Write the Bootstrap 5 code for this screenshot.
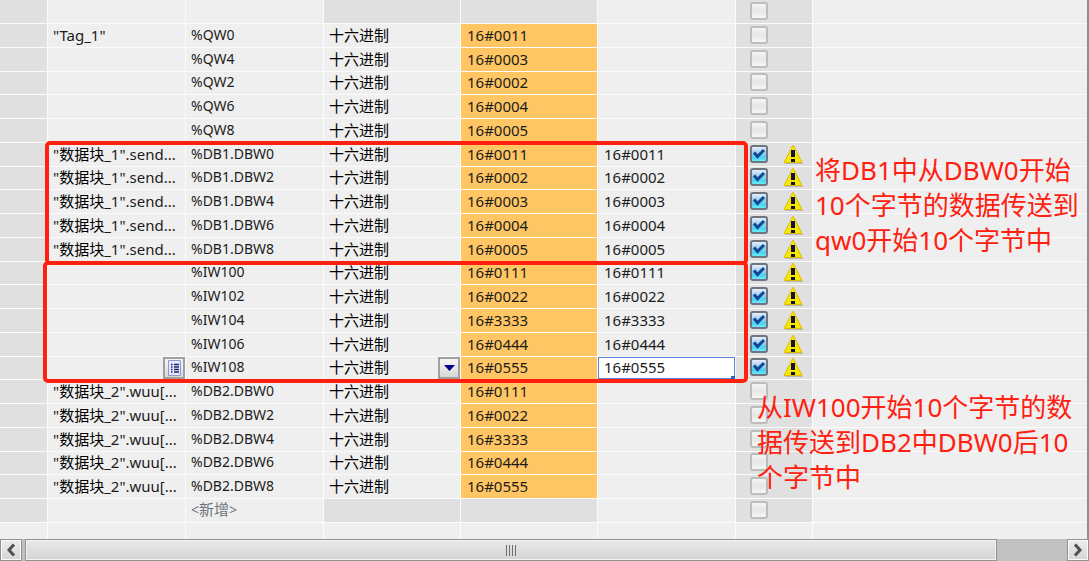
<!DOCTYPE html>
<html lang="zh-CN">
<head>
<meta charset="utf-8">
<meta name="viewport" content="width=device-width, initial-scale=1">
<title>监控表</title>
<link href="https://cdn.jsdelivr.net/npm/bootstrap@5.3.0/dist/css/bootstrap.min.css" rel="stylesheet">
<style>
  body { font-family: "Noto Sans", "Noto Sans CJK SC", sans-serif; font-size: 14px; color: #1c1c1c; background: #efefef; }
  .watch-pane { min-height: 0; border-right: 2px solid #8f8c9c; }
  .watch-table { table-layout: fixed; border-collapse: separate; border-spacing: 0; line-height: 20px; }
  .watch-table tr { height: 24px; }
  .watch-table tr:nth-child(4n) { height: 23px; }
  .watch-table td { padding: 0 5px 2px; border-right: 1px solid #fbfbfb; border-bottom: 1px solid #fbfbfb; background: #efefef; vertical-align: middle; white-space: nowrap; overflow: hidden; }
  .watch-table td:last-child { border-right: 0; }
  .watch-table td.shade { background: #e0e0e0; }
  .watch-table td.live { background: #ffc663; }
  .watch-table td.num { font-size: 15px; padding-left: 6px; }
  .watch-table td.tag-name { font-size: 15px; }
  .watch-table td.fmt, .cjk { font-size: 15px; color: #000; }
  .watch-table td.edit { padding: 0; }
  .col-index { width: 48px; } .col-wide { width: 138px; } .col-mid { width: 137px; } .col-flag { width: 77px; }
  .watch-table td.flags { padding: 0 0 2px 14px; }
  .flag-pair { height: 20px; gap: 15px; }
  .tick { appearance: none; display: block; width: 18px; height: 18px; margin: 0; border: 2px solid #bdbdbd; border-radius: 3px; background: linear-gradient(#f5f5f5, #e6e6e6 50%, #f6f6f6); }
  .tick:checked { border-color: #6f7680; background: url("data:image/svg+xml,%3Csvg xmlns='http://www.w3.org/2000/svg' viewBox='0 0 14 14'%3E%3Cpath d='M2 5.5l3.5 4L12 3' fill='none' stroke='%23084a94' stroke-width='3'/%3E%3C/svg%3E") center / 14px 14px no-repeat, linear-gradient(#e8f0ff, #a4ccf0 40%, #4bd0ee 75%, #6cecf8); }
  .tool { width: 22px; height: 22px; padding: 0; border: 2px solid #a0a0a0; background: linear-gradient(#f6f6f6, #d8d8d8); }
  .fmt-select { appearance: none; display: block; width: 100%; height: 22px; padding: 0 0 2px; border: 0; background: transparent; color: inherit; font: inherit; line-height: 20px; }
  .fmt-arrow { position: absolute; right: 0; top: 0; pointer-events: none; }
  .watch-table .edit-box { display: block; width: 100%; height: 22px; padding: 0 5px 2px; border: 1px solid #5b85d8; border-radius: 0; background: #fff; color: inherit; font: inherit; outline: 0; }
  .grip { position: absolute; right: 0; bottom: 0; width: 4px; height: 3px; background: #2c62c8; }
  .frame { position: absolute; left: 45px; width: 703px; border: 4px solid #ff2010; border-radius: 5px; pointer-events: none; }
  .frame-send { top: 141px; height: 124px; }
  .frame-input { top: 261px; height: 122px; left: 43px; width: 705px; }
  .note { position: absolute; margin: 0; color: #ff2010; font-size: 26px; line-height: 35px; white-space: nowrap; pointer-events: none; }
  .note-send { left: 815px; top: 153px; }
  .note-input { left: 757px; top: 390px; }
  .hbar { height: 22px; background: #c1c1c1; }
  .hbar button { width: 22px; padding: 0; border: 1px solid #929292; box-shadow: inset 0 0 0 1px #fafafa; background: linear-gradient(#ececec, #d6d6d6); }
  .hbar .thumb { width: 93%; margin-left: 3px; border: 1px solid #929292; box-shadow: inset 0 0 0 1px #f2f2f2; background: linear-gradient(#e9e9e9, #d4d4d4); }
</style>
</head>
<body class="vh-100 d-flex flex-column overflow-hidden">
<main class="watch-pane position-relative flex-grow-1 overflow-hidden">
  <table class="watch-table w-100" aria-label="监控表">
    <colgroup><col class="col-index"><col class="col-wide"><col class="col-wide"><col class="col-mid"><col class="col-mid"><col class="col-wide"><col class="col-flag"><col></colgroup>
    <tbody id="rows"></tbody>
  </table>
  <div class="frame frame-input"></div>
  <div class="frame frame-send"></div>
  <p class="note note-send">将DB1中从DBW0开始<br>10个字节的数据传送到<br>qw0开始10个字节中</p>
  <p class="note note-input">从IW100开始10个字节的数<br>据传送到DB2中DBW0后10<br>个字节中</p>
</main>
<div class="hbar d-flex flex-shrink-0">
  <button type="button" class="d-flex align-items-center justify-content-center" aria-label="向左滚动"><svg width="10" height="14" viewBox="0 0 10 14"><path d="M8 1.5L3 7l5 5.5" fill="none" stroke="#505050" stroke-width="3"/></svg></button>
  <div class="flex-grow-1 d-flex">
    <div class="thumb d-flex align-items-center justify-content-center"><svg width="10" height="11" viewBox="0 0 10 11"><path d="M.5 0v11M3.5 0v11M6.5 0v11M9.5 0v11" stroke="#707070"/></svg></div>
  </div>
  <button type="button" class="d-flex align-items-center justify-content-center" aria-label="向右滚动"><svg width="10" height="14" viewBox="0 0 10 14"><path d="M2 1.5L7 7l-5 5.5" fill="none" stroke="#505050" stroke-width="3"/></svg></button>
</div>
<script>
  // name, address, monitored value, modify value
  const send = '"<span class="cjk">数据块</span>_1".send...';
  const recv = '"<span class="cjk">数据块</span>_2".wuu[...';
  const data = [
    ['"Tag_1"', '%QW0', '0011'], ['', '%QW4', '0003'], ['', '%QW2', '0002'], ['', '%QW6', '0004'], ['', '%QW8', '0005'],
    [send, '%DB1.DBW0', '0011', 1], [send, '%DB1.DBW2', '0002', 1], [send, '%DB1.DBW4', '0003', 1], [send, '%DB1.DBW6', '0004', 1], [send, '%DB1.DBW8', '0005', 1],
    ['', '%IW100', '0111', 1], ['', '%IW102', '0022', 1], ['', '%IW104', '3333', 1], ['', '%IW106', '0444', 1], ['', '%IW108', '0555', 2],
    [recv, '%DB2.DBW0', '0111'], [recv, '%DB2.DBW2', '0022'], [recv, '%DB2.DBW4', '3333'], [recv, '%DB2.DBW6', '0444'], [recv, '%DB2.DBW8', '0555']
  ];
  const warn = '<svg width="20" height="20" viewBox="0 0 20 20"><path d="M11 2l9 18H2z" fill="#b8b8b8"/><path d="M10 1l9 17.500H1z" fill="#f8e800" stroke="#e0c000"/><path d="M8 6h4v7H8zM8 15h4v3H8z" fill="#10103c"/></svg>';
  const list = '<button type="button" class="tool d-flex align-items-center justify-content-center ms-auto" aria-label="选择变量"><svg width="15" height="16" viewBox="0 0 15 16"><path d="M1.500.5h12v15h-12z" fill="#e4e8ff" stroke="#8e98d8"/><path d="M4 4.500h1.500M4 7h1.500M4 9.500h1.500M4 12h1.500M7 4.500h5M7 7h5M7 9.500h5M7 12h5" stroke="#20206c" stroke-width="1.300"/></svg></button>';
  const choice = '<div class="position-relative"><select class="fmt-select" aria-label="显示格式"><option>十六进制</option></select><span class="tool fmt-arrow d-flex align-items-center justify-content-center"><svg width="11" height="6" viewBox="0 0 11 6"><path d="M0 0h11L5.500 6z" fill="#00008c"/></svg></span></div>';
  const flags = (on, label) => `<td class="shade flags"><div class="flag-pair d-flex align-items-center"><input type="checkbox" class="tick" aria-label="修改 ${label}"${on ? ' checked' : ''}>${on ? warn : ''}</div></td><td></td>`;
  const blank = (text, label) => `<tr><td class="shade"></td><td></td><td class="text-secondary">${text}</td><td class="shade"></td><td class="shade"></td><td></td>${flags(false, label)}</tr>`;
  const line = ([name, addr, val, mode]) => {
    const active = mode === 2;
    const modify = active
      ? `<td class="num edit p-0"><div class="position-relative"><input type="text" class="edit-box" value="16#${val}" aria-label="修改值"><span class="grip"></span></div></td>`
      : `<td class="num">${mode ? '16#' + val : ''}</td>`;
    return `<tr><td class="shade"></td><td class="tag-name${active ? ' py-0 pe-0' : ''}">${active ? list : name}</td><td>${addr}</td><td class="fmt${active ? ' py-0 pe-0' : ''}">${active ? choice : '十六进制'}</td><td class="num live">16#${val}</td>${modify}${flags(mode, addr)}</tr>`;
  };
  document.getElementById('rows').innerHTML = blank('', '上一行') + data.map(line).join('') +
    blank('&lt;<span class="cjk text-secondary">新增</span>&gt;', '新增') + '<tr>' + '<td></td>'.repeat(8) + '</tr>';
</script>
<script src="https://cdn.jsdelivr.net/npm/bootstrap@5.3.0/dist/js/bootstrap.bundle.min.js"></script>
</body>
</html>
